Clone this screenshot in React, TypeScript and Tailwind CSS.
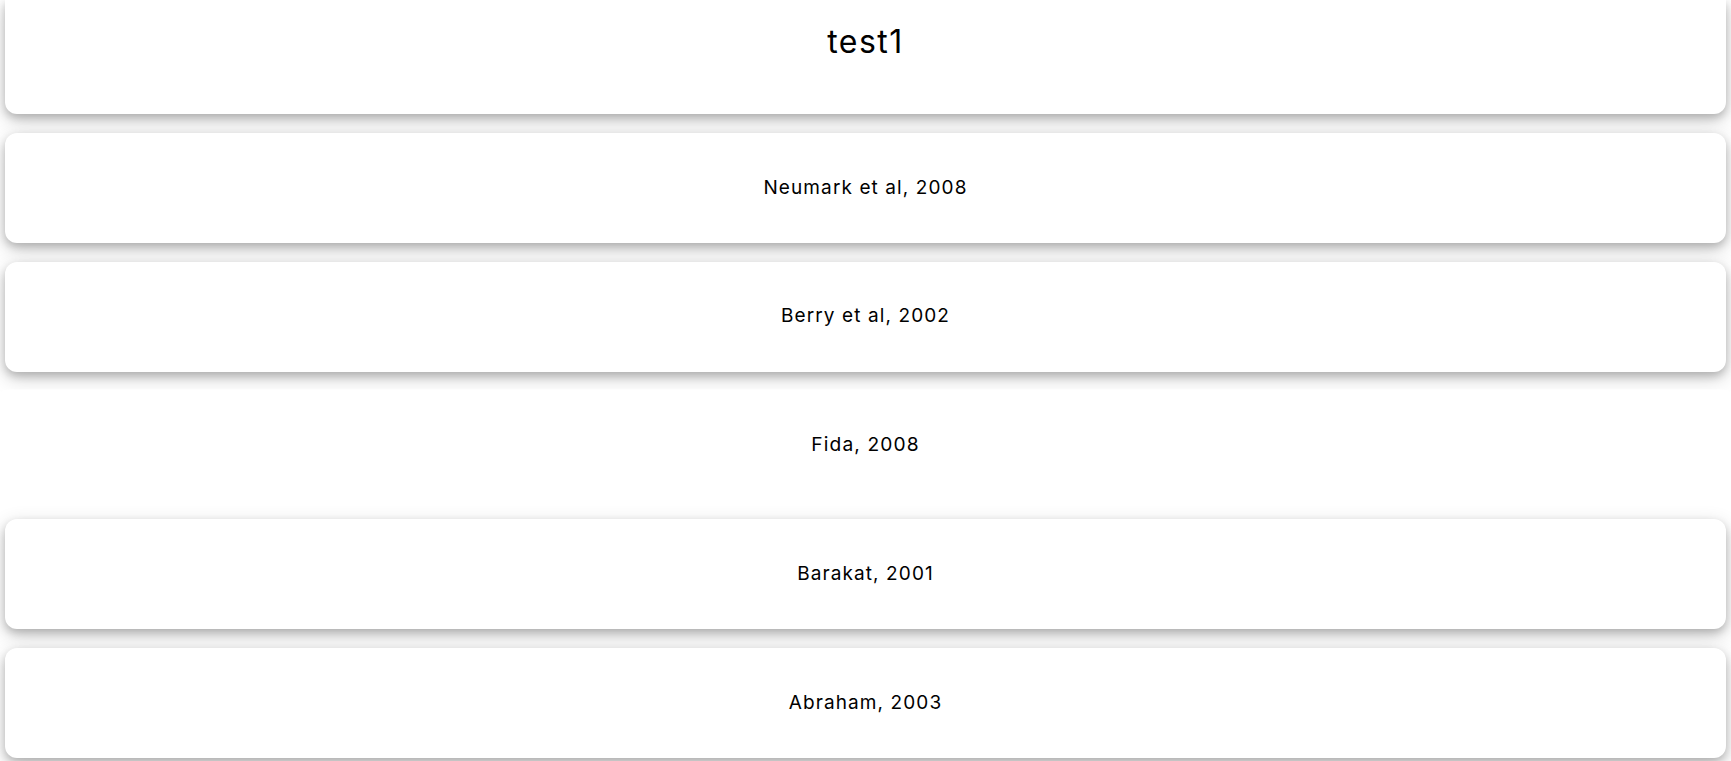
const studies = [
  { name: "Neumark et al, 2008" },
  { name: "Berry et al, 2002" },
  { name: "Fida, 2008", hovered: true },
  { name: "Barakat, 2001" },
  { name: "Abraham, 2003" },
];

const cardShadow =
  "shadow-[0_4px_8px_0_rgba(0,0,0,0.2),0_6px_20px_0_rgba(0,0,0,0.19)]";

function StudyCard({ name, hovered }: { name: string; hovered?: boolean }) {
  return (
    <div
      className={
        hovered
          ? "mx-[5px] h-[110px] flex items-center justify-center bg-white rounded-xl scale-[1.01]"
          : `mx-[5px] h-[110px] flex items-center justify-center bg-white rounded-xl ${cardShadow}`
      }
    >
      <span className="text-[19px] tracking-[1.1px] text-black">{name}</span>
    </div>
  );
}

export default function App() {
  return (
    <div
      className="min-h-screen bg-white overflow-hidden flex flex-col gap-[18.75px]"
      style={{ fontFamily: "Inter, 'Open Sans', sans-serif" }}
    >
      <div
        className={`mx-[5px] h-[114px] flex justify-center pt-[22px] bg-white rounded-b-xl ${cardShadow}`}
      >
        <h1 className="text-[32px] leading-[40px] tracking-[1.5px] text-black">
          test1
        </h1>
      </div>
      {studies.map((s) => (
        <StudyCard key={s.name} name={s.name} hovered={s.hovered} />
      ))}
    </div>
  );
}
